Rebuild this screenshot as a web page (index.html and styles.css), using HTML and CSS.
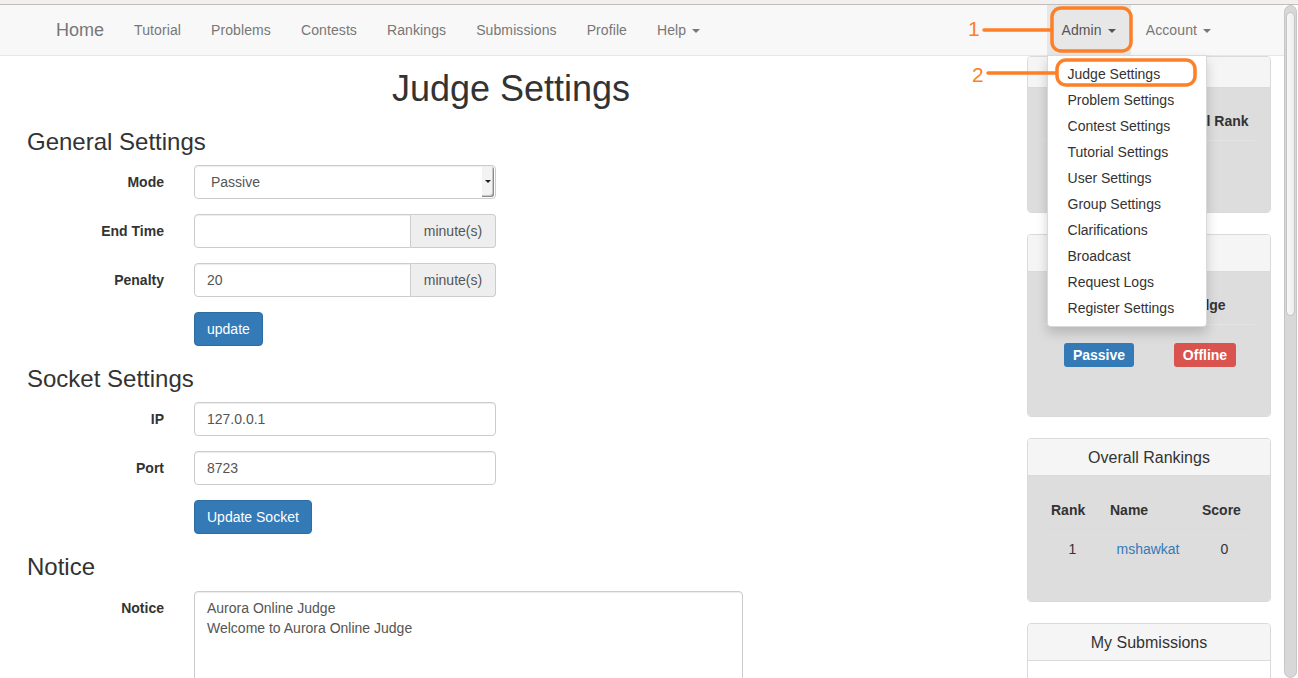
FILE: index.html
```html
<!DOCTYPE html>
<html lang="en">
<head>
<meta charset="utf-8">
<title>Judge Settings</title>
<link rel="stylesheet" href="styles.css">
</head>
<body>
<div class="chrome-top"></div>
<div class="window">
  <div class="page">
    <nav class="navbar">
      <a class="brand" href="#">Home</a>
      <ul class="nav">
        <li><a href="#">Tutorial</a></li>
        <li><a href="#">Problems</a></li>
        <li><a href="#">Contests</a></li>
        <li><a href="#">Rankings</a></li>
        <li><a href="#">Submissions</a></li>
        <li><a href="#">Profile</a></li>
        <li><a href="#">Help <span class="caret"></span></a></li>
      </ul>
      <ul class="nav nav-right">
        <li class="dropdown open">
          <a href="#">Admin <span class="caret"></span></a>
          <ul class="dropdown-menu">
            <li><a href="#">Judge Settings</a></li>
            <li><a href="#">Problem Settings</a></li>
            <li><a href="#">Contest Settings</a></li>
            <li><a href="#">Tutorial Settings</a></li>
            <li><a href="#">User Settings</a></li>
            <li><a href="#">Group Settings</a></li>
            <li><a href="#">Clarifications</a></li>
            <li><a href="#">Broadcast</a></li>
            <li><a href="#">Request Logs</a></li>
            <li><a href="#">Register Settings</a></li>
          </ul>
        </li>
        <li><a href="#">Account <span class="caret"></span></a></li>
      </ul>
    </nav>

    <div class="content">
      <main class="main">
        <h1 class="title">Judge Settings</h1>

        <h3 class="section">General Settings</h3>
        <div class="form-group">
          <label class="control-label">Mode</label>
          <div class="select"><span class="select-text">Passive</span><span class="select-arrow"><span class="tri"></span></span></div>
        </div>
        <div class="form-group">
          <label class="control-label">End Time</label>
          <div class="input-group"><input class="form-control grouped" type="text" value=""><span class="addon">minute(s)</span></div>
        </div>
        <div class="form-group">
          <label class="control-label">Penalty</label>
          <div class="input-group"><input class="form-control grouped" type="text" value="20"><span class="addon">minute(s)</span></div>
        </div>
        <div class="form-group">
          <span></span>
          <div><button class="btn">update</button></div>
        </div>

        <h3 class="section">Socket Settings</h3>
        <div class="form-group">
          <label class="control-label">IP</label>
          <input class="form-control" type="text" value="127.0.0.1">
        </div>
        <div class="form-group">
          <label class="control-label">Port</label>
          <input class="form-control" type="text" value="8723">
        </div>
        <div class="form-group">
          <span></span>
          <div><button class="btn">Update Socket</button></div>
        </div>

        <h3 class="section">Notice</h3>
        <div class="form-group wide">
          <label class="control-label">Notice</label>
          <textarea class="form-control textarea">Aurora Online Judge
Welcome to Aurora Online Judge</textarea>
        </div>
      </main>

      <aside class="sidebar">
        <div class="panel">
          <div class="panel-heading short">My Status</div>
          <div class="panel-body gray">
            <table class="tbl two">
              <tr><th>Name</th><th>Overall Rank</th></tr>
              <tr><td></td><td></td></tr>
            </table>
          </div>
        </div>

        <div class="panel">
          <div class="panel-heading">Judge Status</div>
          <div class="panel-body gray tall">
            <table class="tbl two">
              <tr><th>Mode</th><th>Judge</th></tr>
              <tr><td class="badge-cell"><span class="label blue">Passive</span></td><td class="badge-cell"><span class="label red">Offline</span></td></tr>
            </table>
          </div>
        </div>

        <div class="panel">
          <div class="panel-heading">Overall Rankings</div>
          <div class="panel-body gray">
            <table class="tbl rank">
              <tr><th class="c1">Rank</th><th class="c2">Name</th><th class="c3">Score</th></tr>
              <tr><td>1</td><td><a href="#" class="link">mshawkat</a></td><td>0</td></tr>
            </table>
          </div>
        </div>

        <div class="panel">
          <div class="panel-heading">My Submissions</div>
          <div class="panel-body white"></div>
        </div>
      </aside>
    </div>
  </div>
  <div class="scrollbar"><div class="thumb"></div></div>
</div>

<svg class="annot" width="1298" height="678" viewBox="0 0 1298 678">
  <text x="968" y="36" class="annot-num">1</text>
  <line x1="984" y1="30" x2="1051" y2="30" class="annot-line"/>
  <rect x="1052" y="8" width="79" height="43" rx="9" class="annot-rect"/>
  <text x="972" y="82" class="annot-num">2</text>
  <line x1="988" y1="73" x2="1056" y2="73" class="annot-line"/>
  <rect x="1057" y="60" width="138" height="25" rx="9" class="annot-rect"/>
</svg>
</body>
</html>
```

FILE: styles.css
```css
* { box-sizing: border-box; }

html, body {
  margin: 0;
  padding: 0;
  height: 678px;
  overflow: hidden;
}

body {
  position: relative;
  font-family: "Liberation Sans", Arial, Helvetica, sans-serif;
  font-size: 14px;
  line-height: 20px;
  color: #333;
  background: #fff;
}

a { text-decoration: none; color: inherit; }
ul { list-style: none; margin: 0; padding: 0; }

.chrome-top {
  height: 5px;
  background: #f1f0ee;
  border-bottom: 1px solid #bfbebc;
}

.window {
  display: flex;
  height: 673px;
}

.page {
  width: 1284px;
  flex: none;
}

/* Navbar */
.navbar {
  display: flex;
  align-items: stretch;
  height: 51px;
  background: #f8f8f8;
  border-bottom: 1px solid #e7e7e7;
  padding-left: 41px;
  padding-right: 58px;
}

.brand {
  padding: 15px;
  font-size: 18px;
  line-height: 20px;
  color: #777;
}

.nav {
  display: flex;
}

.nav > li {
  position: relative;
}

.nav > li > a {
  display: block;
  padding: 15px;
  line-height: 20px;
  color: #777;
  height: 50px;
  letter-spacing: 0.1px;
}

.nav-right {
  margin-left: auto;
}

.dropdown.open > a {
  background: #e7e7e7;
  color: #555;
}

.caret {
  display: inline-block;
  width: 0;
  height: 0;
  margin-left: 2px;
  vertical-align: middle;
  border-top: 4px solid;
  border-right: 4px solid transparent;
  border-left: 4px solid transparent;
}

.dropdown-menu {
  position: absolute;
  top: 100%;
  left: 0;
  z-index: 10;
  min-width: 160px;
  padding: 5px 0;
  background: #fff;
  border: 1px solid rgba(0, 0, 0, .15);
  border-radius: 0 0 4px 4px;
  box-shadow: 0 6px 12px rgba(0, 0, 0, .175);
}

.dropdown-menu a {
  display: block;
  padding: 3px 20px;
  line-height: 20px;
  color: #333;
  white-space: nowrap;
  letter-spacing: 0;
}

/* Content */
.content {
  display: flex;
  align-items: flex-start;
}

.main {
  width: 968px;
  margin-left: 27px;
  flex: none;
}

.title {
  margin: 13px 0 10px;
  font-size: 36px;
  line-height: 1.1;
  font-weight: normal;
  text-align: center;
}

.section {
  margin: 20px 0 10px;
  font-size: 24px;
  line-height: 1.1;
  font-weight: normal;
}

.form-group {
  display: grid;
  grid-template-columns: 137px 302px;
  column-gap: 30px;
  margin-bottom: 15px;
}

.form-group.wide {
  grid-template-columns: 137px 549px;
}

.control-label {
  text-align: right;
  font-weight: bold;
  padding-top: 7px;
  line-height: 20px;
}

.form-control {
  display: block;
  width: 100%;
  height: 34px;
  padding: 6px 12px;
  font-family: inherit;
  font-size: 14px;
  line-height: 20px;
  color: #555;
  background: #fff;
  border: 1px solid #ccc;
  border-radius: 4px;
  box-shadow: inset 0 1px 1px rgba(0, 0, 0, .075);
  outline: none;
}

.textarea {
  height: 120px;
  resize: none;
  overflow: hidden;
}

.select {
  display: flex;
  align-items: center;
  height: 34px;
  padding: 1px 1px 1px 16px;
  border: 1px solid #ccc;
  border-radius: 4px;
  background: #fff;
  color: #555;
  box-shadow: inset 0 1px 1px rgba(0, 0, 0, .075);
}

.select-text {
  flex: 1;
}

.select-arrow {
  align-self: stretch;
  width: 12px;
  display: flex;
  align-items: center;
  justify-content: center;
  background: #f3f3f3;
  box-shadow: inset -1px -1px 0 #8a8a8a, inset -2px -2px 0 #c9c9c9;
  border-radius: 0 3px 3px 0;
}

.tri {
  width: 0;
  height: 0;
  border-top: 3px solid #222;
  border-left: 3px solid transparent;
  border-right: 3px solid transparent;
  margin-right: 1px;
}

.input-group {
  display: flex;
}

.form-control.grouped {
  flex: 1;
  min-width: 0;
  border-radius: 4px 0 0 4px;
}

.addon {
  width: 85px;
  flex: none;
  height: 34px;
  padding: 6px 12px;
  text-align: center;
  color: #555;
  background: #eee;
  border: 1px solid #ccc;
  border-left: 0;
  border-radius: 0 4px 4px 0;
}

.btn {
  display: inline-block;
  height: 34px;
  padding: 6px 12px;
  font-family: inherit;
  font-size: 14px;
  line-height: 20px;
  color: #fff;
  background: #337ab7;
  border: 1px solid #2e6da4;
  border-radius: 4px;
}

/* Sidebar */
.sidebar {
  width: 244px;
  margin-left: 32px;
  flex: none;
}

.panel {
  margin-bottom: 21px;
  border: 1px solid #dadada;
  border-radius: 4px;
  background: #fff;
  overflow: hidden;
}

.panel-heading {
  padding: 11px 15px 9px;
  font-size: 16px;
  line-height: 16px;
  text-align: center;
  background: #f5f5f5;
  border-bottom: 1px solid #dadada;
}

.panel-heading.short {
  padding: 6px 15px 7px;
  line-height: 17px;
}

.panel-body {
  padding: 15px;
}

.panel-body.gray { background: #dddddd; }
.panel-body.tall { padding-bottom: 21px; }
.panel-body.white { height: 40px; }

.tbl {
  width: 100%;
  border-collapse: collapse;
  margin-bottom: 20px;
  table-layout: fixed;
}

.tbl th {
  padding: 8px;
  line-height: 20px;
  height: 37px;
  font-weight: bold;
  white-space: nowrap;
}

.tbl td {
  padding: 8px;
  line-height: 20px;
  height: 37px;
  text-align: center;
  border-top: 1px solid #e3e3e3;
  white-space: nowrap;
}

.tbl.two th { text-align: center; }
.tbl.two th:first-child { width: 112px; }

.tbl.rank { margin-bottom: 19px; }
.tbl.rank th { text-align: left; border-bottom: 2px solid #dcdcdc; height: 39px; }
.tbl.rank td { border-top: 0; }
.tbl.rank .c1 { width: 59px; }
.tbl.rank .c2 { width: 92px; }

.tbl td.badge-cell {
  padding-top: 18px;
}

.label {
  display: inline-block;
  height: 24px;
  padding: 3px 8.5px;
  font-size: 14px;
  line-height: 18px;
  font-weight: bold;
  color: #fff;
  border-radius: 3px;
  vertical-align: top;
}

.label.blue { background: #337ab7; }
.label.red { background: #d9534f; }

.link { color: #337ab7; }

/* Scrollbar */
.scrollbar {
  flex: none;
  width: 13px;
  margin-right: 1px;
  padding: 6px 1px 0 1px;
  background: #d8d8d8;
  border: 1px solid #c6c6c6;
  border-radius: 7px;
}

.thumb {
  height: 304px;
  border-radius: 6px;
  background: linear-gradient(to right, #f8f8f8, #eeeeee);
  border: 1px solid #c4c4c4;
}

/* Annotations */
.annot {
  position: absolute;
  top: 0;
  left: 0;
  pointer-events: none;
  z-index: 20;
}

.annot-num {
  font-family: "Liberation Sans", Arial, sans-serif;
  font-size: 21px;
  fill: #ff7f27;
}

.annot-line {
  stroke: #ff7f27;
  stroke-width: 3.5;
  stroke-linecap: round;
}

.annot-rect {
  fill: none;
  stroke: #ff7f27;
  stroke-width: 3.5;
}
```
